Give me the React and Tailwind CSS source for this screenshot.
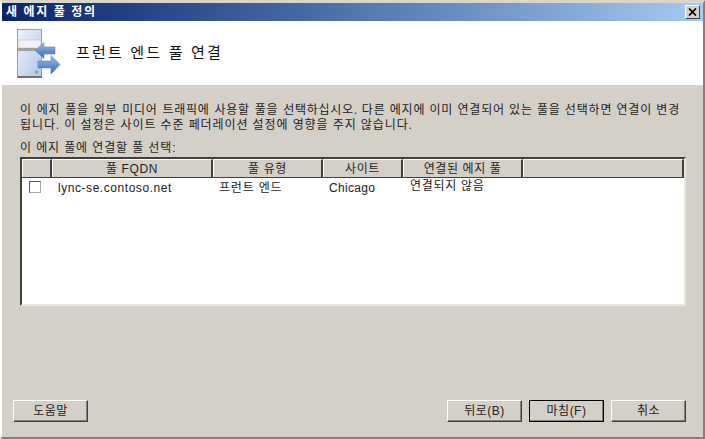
const font = { fontFamily: '"Liberation Sans", "Noto Sans CJK KR", sans-serif' };

const columns = [
  { name: '', width: 'w-[30px]' },
  { name: '풀 FQDN', width: 'w-[161px]' },
  { name: '풀 유형', width: 'w-[110px]' },
  { name: '사이트', width: 'w-[80px]' },
  { name: '연결된 에지 풀', width: 'w-[120px]' },
  { name: '', width: 'flex-1' },
];

function HeaderIcon() {
  return (
    <svg width="48" height="52" viewBox="0 0 48 52">
      <defs>
        <linearGradient id="case" x1="0" y1="0" x2="1" y2="1">
          <stop offset="0" stopColor="#f0f3fb" />
          <stop offset="1" stopColor="#b4c5ea" />
        </linearGradient>
        <linearGradient id="arrow" x1="0" y1="0" x2="0" y2="1">
          <stop offset="0" stopColor="#a0bdec" />
          <stop offset="1" stopColor="#3566b4" />
        </linearGradient>
      </defs>
      <rect x="0.5" y="0.5" width="24" height="48" fill="url(#case)" stroke="#9c9c9c" />
      <rect x="1" y="11" width="23" height="8" fill="#f0f2f8" stroke="#b8b8b8" strokeWidth="0.6" />
      <rect x="1" y="19" width="23" height="3" fill="#a0a0a0" />
      <rect x="1" y="47" width="24" height="2" fill="#6f6f6f" />
      <circle cx="19.5" cy="43" r="1.6" fill="#35d04a" />
      <path d="M18 21.5 L27 13.5 V18 H38 V25 H27 V29.5 Z" fill="url(#arrow)" stroke="#5c86c4" strokeWidth="0.6" />
      <path d="M43 35.5 L34 26.5 V32 H21 V39 H34 V45 Z" fill="url(#arrow)" stroke="#5c86c4" strokeWidth="0.6" />
    </svg>
  );
}

function Button({ label, primary }) {
  return (
    <div className={`w-[75px] h-[22px] flex items-center justify-center text-[12px] text-[#222] tracking-[0.5px] border border-t-white border-l-white border-r-[#404040] border-b-[#404040] shadow-[inset_-1px_-1px_0_#808080] ${primary ? 'outline outline-1 -outline-offset-1 outline-black' : ''}`}>
      {label}
    </div>
  );
}

export default function App() {
  return (
    <div style={font} className="w-[705px] h-[439px] flex flex-col bg-[#d4d0c8] border-2 border-t-[3px] border-[#d4d0c8] border-l-white border-t-[#d8d5ce] border-r-[#808080] border-b-[#808080] overflow-hidden">
      <div className="h-[18px] shrink-0 flex items-center justify-between pl-[4px] pr-[3px] bg-gradient-to-r from-[#0a246a] to-[#a6caf0]">
        <span className="text-[12px] font-bold text-white tracking-[1.6px]">새 에지 풀 정의</span>
        <div className="w-[15px] h-[14px] flex items-center justify-center bg-[#d4d0c8] border border-t-white border-l-white border-r-[#404040] border-b-[#404040]">
          <svg width="9" height="8" viewBox="0 0 9 8">
            <path d="M1 0.5 L8 7.5 M8 0.5 L1 7.5" stroke="#000" strokeWidth="1.7" />
          </svg>
        </div>
      </div>

      <div className="h-[64px] shrink-0 bg-white flex pl-[15px] pt-[8px] gap-[11px]">
        <HeaderIcon />
        <span className="text-[15px] leading-[20px] mt-[14px] text-[#111] tracking-[2.2px]">프런트 엔드 풀 연결</span>
      </div>

      <div className="flex-1 flex flex-col px-[18px] pt-[18px] pb-[15px]">
        <p className="text-[12px] leading-[15px] text-[#222] whitespace-nowrap">
          <span className="tracking-[0.7px] [word-spacing:1px]">이 에지 풀을 외부 미디어 트래픽에 사용할 풀을 선택하십시오.</span>
          <span className="tracking-[0.83px] ml-[4px]">다른 에지에 이미 연결되어 있는 풀을 선택하면 연결이 변경</span>
          <br />
          <span className="tracking-[0.9px]">됩니다. 이 설정은 사이트 수준 페더레이션 설정에 영향을 주지 않습니다.</span>
        </p>
        <p className="mt-[8px] text-[12px] leading-[15px] text-[#222] tracking-[0.88px]">이 에지 풀에 연결할 풀 선택:</p>

        <div className="mt-[1px] h-[149px] w-[666px] flex flex-col bg-white border-2 border-t-[#404040] border-l-[#404040] border-r-[#e8e6e1] border-b-[#e8e6e1]">
          <div className="h-[19px] shrink-0 flex bg-[#d4d0c8] border-b border-[#404040]">
            {columns.map((c, i) => (
              <div
                key={i}
                className={`${c.width} flex items-center justify-center text-[12px] text-[#222] tracking-[0.6px] border-t border-l border-t-white border-l-white border-r-2 border-r-[#404040]`}
              >
                {c.name}
              </div>
            ))}
          </div>
          <div className="flex text-[12px] text-[#222] h-[20px] items-center">
            <div className="w-[30px] flex pl-[7px] -mt-[2px]">
              <div className="w-[12px] h-[12px] bg-white border border-t-[#555] border-l-[#555] border-r-[#aaa] border-b-[#aaa]" />
            </div>
            <div className="w-[161px] pl-[6px] tracking-[0.55px]">lync-se.contoso.net</div>
            <div className="w-[110px] pl-[6px] tracking-[0.8px]">프런트 엔드</div>
            <div className="w-[80px] pl-[6px] tracking-[0.3px]">Chicago</div>
            <div className="pl-[7px] tracking-[0.7px] -mt-[4px]">연결되지 않음</div>
          </div>
        </div>

        <div className="mt-auto flex -ml-[7px] w-[673px]">
          <Button label="도움말" />
          <div className="ml-auto flex gap-[7px]">
            <Button label="뒤로(B)" />
            <Button label="마침(F)" primary />
            <Button label="취소" />
          </div>
        </div>
      </div>
    </div>
  );
}
